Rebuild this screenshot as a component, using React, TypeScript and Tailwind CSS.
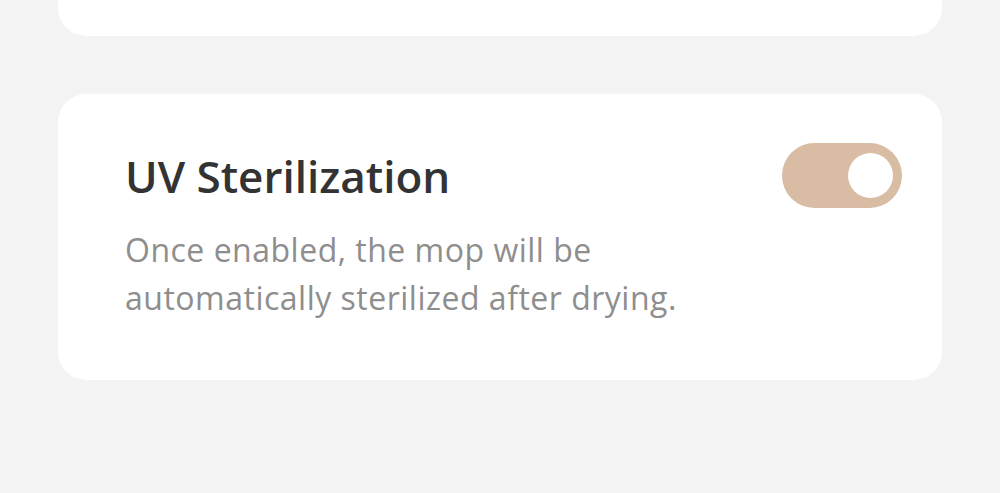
export default function App() {
  return (
    <div
      className="min-h-[493px] w-full bg-[#f3f3f3] px-[58px] flex flex-col"
      style={{ fontFamily: '"Open Sans", "Noto Sans", sans-serif' }}
    >
      {/* Previous card, scrolled mostly out of view */}
      <div className="h-[36px] bg-white rounded-b-[28px]" />

      <div className="mt-[58px] bg-white rounded-[28px] h-[286px] pl-[67px] pr-[40px] pt-[57px] flex justify-between items-start">
        <div className="max-w-[600px]">
          <h2 className="text-[44px] font-semibold text-[#333333] leading-[50px]">
            UV Sterilization
          </h2>
          <p className="mt-[25px] text-[32px] text-[#8e8e8e] leading-[48px] tracking-[0.5px]">
            Once enabled, the mop will be automatically sterilized after drying.
          </p>
        </div>

        <button
          type="button"
          aria-pressed="true"
          className="mt-[-8px] w-[120px] h-[65px] rounded-full bg-[#d8bca3] flex items-center justify-end pr-[9px] shrink-0"
        >
          <span className="w-[45px] h-[45px] rounded-full bg-white" />
        </button>
      </div>
    </div>
  );
}
